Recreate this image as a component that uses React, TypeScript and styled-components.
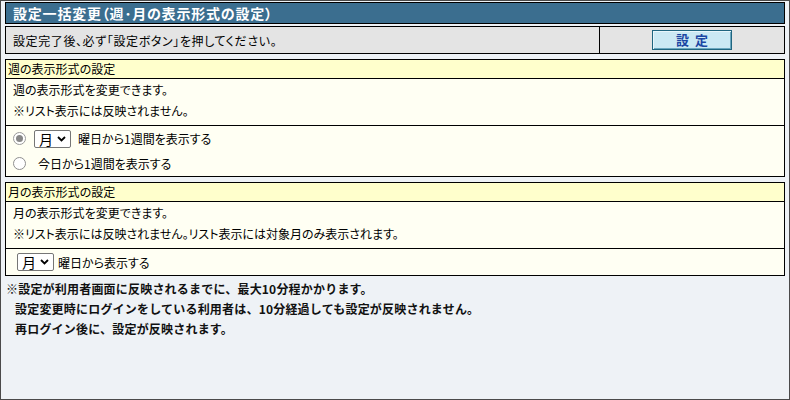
import React from "react";
import styled, { createGlobalStyle } from "styled-components";

const GlobalStyle = createGlobalStyle`
  html, body {
    margin: 0;
    padding: 0;
  }
  body {
    font-family: "Noto Sans CJK JP", "Noto Sans", sans-serif;
    font-size: 12px;
    color: #000;
    background: #eef2f6;
  }
`;

const Page = styled.div`
  box-sizing: border-box;
  width: 790px;
  height: 400px;
  border: 1px solid #4a4a4a;
  padding: 1px 4px 0 4px;
  background: #eef2f6;
  display: flex;
  flex-direction: column;
`;

const TitleBar = styled.div`
  box-sizing: border-box;
  height: 22px;
  border: 1px solid #000;
  background: #3b6e8f;
  color: #fff;
  font-size: 14px;
  font-weight: bold;
  line-height: 20px;
  padding-left: 7px;
  font-feature-settings: "palt";
  letter-spacing: 0.8px;
`;

const NoticeRow = styled.div`
  box-sizing: border-box;
  height: 28px;
  margin-top: 2px;
  border: 1px solid #000;
  background: #e4e4e4;
  display: grid;
  grid-template-columns: 1fr 184px;
`;

const NoticeText = styled.div`
  display: flex;
  align-items: center;
  padding-left: 7px;
  border-right: 1px solid #000;
  font-feature-settings: "palt";
  letter-spacing: 0.6px;
`;

const ButtonCell = styled.div`
  display: flex;
  align-items: center;
  justify-content: center;
`;

const SubmitButton = styled.button`
  box-sizing: border-box;
  width: 80px;
  height: 20px;
  padding: 0;
  border: 1px solid #1f6580;
  box-shadow: inset 1px 1px 0 #e8f6fb, inset -1px -1px 0 #6aa7bf;
  background: #cbe9f4;
  color: #1b46a3;
  font-family: "Noto Sans CJK JP", sans-serif;
  font-size: 13px;
  font-weight: bold;
  letter-spacing: 6px;
  text-indent: 6px;
  line-height: 18px;
`;

const Section = styled.section`
  box-sizing: border-box;
  margin-top: 5px;
  border: 1px solid #000;
  background: #fffff3;
  font-feature-settings: "palt";
`;

const SectionHead = styled.div`
  height: 18px;
  line-height: 18px;
  padding-left: 2px;
  background: #ffffcc;
  border-bottom: 1px solid #000;
`;

const SectionBody = styled.div`
  height: 46px;
  padding: 0 7px;
  line-height: 21px;
  border-bottom: 1px solid #000;
`;

const Options = styled.div<{ $indent: number }>`
  padding-left: ${(p) => p.$indent}px;
`;

const OptionRow = styled.label<{ $h: number }>`
  display: flex;
  align-items: center;
  height: ${(p) => p.$h}px;
`;

const Radio = styled.span<{ $checked?: boolean }>`
  box-sizing: border-box;
  width: 13px;
  height: 13px;
  border-radius: 50%;
  border: 1px solid ${(p) => (p.$checked ? "#9a9a9a" : "#8f8f8f")};
  background: #fff;
  display: flex;
  align-items: center;
  justify-content: center;
  flex-shrink: 0;

  &::after {
    content: "";
    display: ${(p) => (p.$checked ? "block" : "none")};
    width: 7px;
    height: 7px;
    border-radius: 50%;
    background: #878787;
  }
`;

const SelectWrap = styled.span<{ $ml: number; $mr: number }>`
  position: relative;
  display: inline-flex;
  margin-left: ${(p) => p.$ml}px;
  margin-right: ${(p) => p.$mr}px;
`;

const Select = styled.select`
  box-sizing: border-box;
  appearance: none;
  width: 37px;
  height: 18px;
  padding: 0 0 0 4px;
  border: 1px solid #767676;
  border-radius: 2px;
  background: #fff;
  color: #000;
  font-family: "Noto Sans CJK JP", sans-serif;
  font-size: 14px;
  line-height: 16px;
  outline: none;
`;

const Chevron = styled.svg`
  position: absolute;
  right: 5px;
  top: 6px;
  pointer-events: none;
`;

const OptionText = styled.span<{ $ml?: number }>`
  margin-left: ${(p) => p.$ml ?? 0}px;
`;

const Notes = styled.div`
  margin-top: 3px;
  font-weight: bold;
  line-height: 20px;
  color: #111;
  letter-spacing: 0.2px;
`;

const NoteLine = styled.div<{ $indent?: boolean }>`
  padding-left: ${(p) => (p.$indent ? 10 : 1)}px;
`;

const DaySelect = ({ ml, mr }: { ml: number; mr: number }) => (
  <SelectWrap $ml={ml} $mr={mr}>
    <Select defaultValue="mon">
      <option value="mon">月</option>
      <option value="tue">火</option>
      <option value="wed">水</option>
      <option value="thu">木</option>
      <option value="fri">金</option>
      <option value="sat">土</option>
      <option value="sun">日</option>
    </Select>
    <Chevron width="9" height="6" viewBox="0 0 9 6">
      <path d="M1 1 L4.5 4.5 L8 1" fill="none" stroke="#000" strokeWidth="1.8" />
    </Chevron>
  </SelectWrap>
);

export default function App() {
  return (
    <>
      <GlobalStyle />
      <Page>
        <TitleBar>設定一括変更（週･月の表示形式の設定）</TitleBar>
        <NoticeRow>
          <NoticeText>設定完了後、必ず「設定ボタン」を押してください。</NoticeText>
          <ButtonCell>
            <SubmitButton type="button">設定</SubmitButton>
          </ButtonCell>
        </NoticeRow>

        <Section>
          <SectionHead>週の表示形式の設定</SectionHead>
          <SectionBody>
            <div>週の表示形式を変更できます。</div>
            <div>※リスト表示には反映されません。</div>
          </SectionBody>
          <Options $indent={7}>
            <OptionRow $h={25}>
              <Radio $checked />
              <DaySelect ml={8} mr={7} />
              <OptionText>曜日から1週間を表示する</OptionText>
            </OptionRow>
            <OptionRow $h={25}>
              <Radio />
              <OptionText $ml={12}>今日から1週間を表示する</OptionText>
            </OptionRow>
          </Options>
        </Section>

        <Section>
          <SectionHead>月の表示形式の設定</SectionHead>
          <SectionBody>
            <div>月の表示形式を変更できます。</div>
            <div>※リスト表示には反映されません。リスト表示には対象月のみ表示されます。</div>
          </SectionBody>
          <Options $indent={0}>
            <OptionRow $h={26}>
              <DaySelect ml={11} mr={4} />
              <OptionText>曜日から表示する</OptionText>
            </OptionRow>
          </Options>
        </Section>

        <Notes>
          <NoteLine>※設定が利用者画面に反映されるまでに、最大10分程かかります。</NoteLine>
          <NoteLine $indent>設定変更時にログインをしている利用者は、10分経過しても設定が反映されません。</NoteLine>
          <NoteLine $indent>再ログイン後に、設定が反映されます。</NoteLine>
        </Notes>
      </Page>
    </>
  );
}
